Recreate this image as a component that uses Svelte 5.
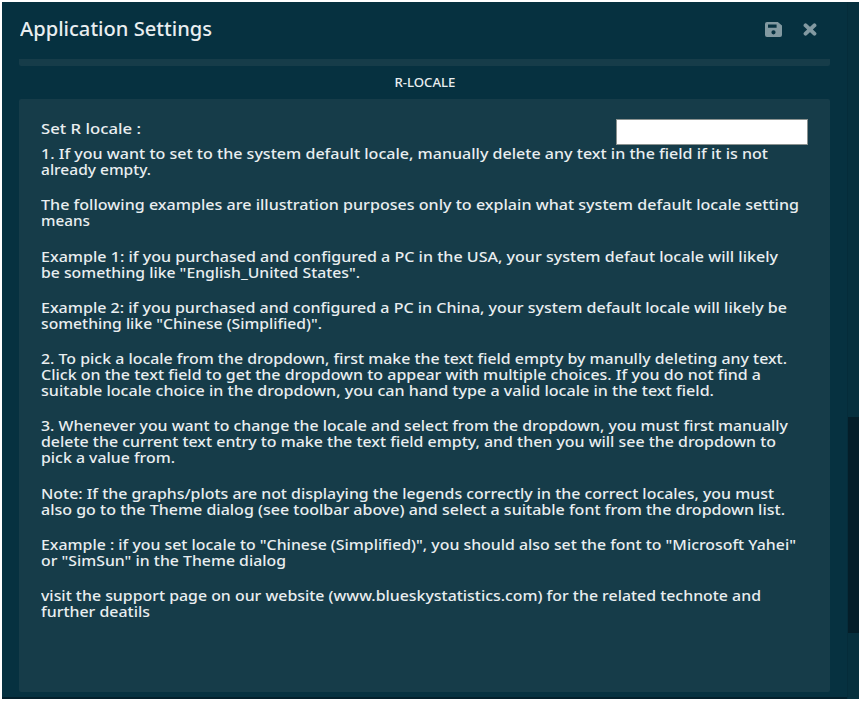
<script>
  // Each line carries its set width in pixels.
  const paragraphs = [
    [['1. If you want to set to the system default locale, manually delete any text in the field if it is not', 727], ['already empty.', 110]],
    [['The following examples are illustration purposes only to explain what system default locale setting', 758], ['means', 49]],
    [['Example 1: if you purchased and configured a PC in the USA, your system defaut locale will likely', 737], ['be something like "English_United States".', 319]],
    [['Example 2: if you purchased and configured a PC in China, your system default locale will likely be', 746], ['something like "Chinese (Simplified)".', 281]],
    [['2. To pick a locale from the dropdown, first make the text field empty by manully deleting any text.', 746], ['Click on the text field to get the dropdown to appear with multiple choices. If you do not find a', 720], ['suitable locale choice in the dropdown, you can hand type a valid locale in the text field.', 673]],
    [['3. Whenever you want to change the locale and select from the dropdown, you must first manually', 747], ['delete the current text entry to make the text field empty, and then you will see the dropdown to', 735], ['pick a value from.', 134]],
    [['Note: If the graphs/plots are not displaying the legends correctly in the correct locales, you must', 733], ['also go to the Theme dialog (see toolbar above) and select a suitable font from the dropdown list.', 744]],
    [['Example : if you set locale to "Chinese (Simplified)", you should also set the font to "Microsoft Yahei"', 755], ['or "SimSun" in the Theme dialog', 245]],
    [['visit the support page on our website (www.blueskystatistics.com) for the related technote and', 720], ['further deatils', 109]]
  ];

  function fit(node, width) {
    const natural = node.getBoundingClientRect().width;
    node.style.transform = `scaleX(${width / natural})`;
  }
</script>

<div class="window">
  <main class="dialog">
    <header>
      <h1><span class="fit" use:fit={192}>Application Settings</span></h1>
      <div class="actions">
        <button aria-label="Save">
          <svg width="17" height="15" viewBox="0 0 17 15"><path fill-rule="evenodd" d="M2 0H12.8L17 3.6V13Q17 15 15 15H2Q0 15 0 13V2Q0 0 2 0ZM3 2.4V5.8H11.6V2.4ZM8.5 8.2A2.1 2.1 0 1 0 8.5 12.4A2.1 2.1 0 1 0 8.5 8.2Z" /></svg>
        </button>
        <button aria-label="Close">
          <svg width="14" height="13" viewBox="0 0 14 13"><path d="M2.6 2.4L11.4 10.6M11.4 2.4L2.6 10.6" /></svg>
        </button>
      </div>
    </header>
    <div class="strip"></div>
    <h2><span class="fit center" use:fit={61}>R-LOCALE</span></h2>
    <section>
      <div class="field">
        <label for="locale"><span class="fit" use:fit={100}>Set R locale :</span></label>
        <input id="locale" type="text" />
      </div>
      {#each paragraphs as lines}
        <p>
          {#each lines as [text, width]}
            <span class="line"><span class="fit" use:fit={width}>{text}</span></span>
          {/each}
        </p>
      {/each}
    </section>
  </main>
  <aside><div class="thumb"></div></aside>
</div>

<style>
  :global(body) { background: #fff; }
  .window {
    box-sizing: border-box;
    width: 861px;
    height: 701px;
    border: 2px solid #fff;
    display: flex;
    background: #063140;
    color: #e9eef0;
    font-family: "Noto Sans", "Open Sans", sans-serif;
    box-shadow: inset 0 -2px #031f2b;
    overflow: hidden;
  }
  .dialog {
    flex: 1;
    display: flex;
    flex-direction: column;
    padding: 0 17px;
  }
  header {
    height: 57px;
    box-sizing: border-box;
    padding: 0 13px 3px 1px;
    display: flex;
    align-items: center;
    justify-content: space-between;
  }
  h1, h2, p { margin: 0; font-weight: 500; }
  .fit { display: inline-block; white-space: nowrap; transform-origin: 0 50%; }
  .center { transform-origin: 50% 50%; }
  h1 { font-size: 20px; line-height: 28px; }
  .actions { display: flex; gap: 21px; align-items: center; padding-top: 1px; }
  button { padding: 0; border: 0; background: none; display: flex; }
  svg { fill: #8299a1; }
  button:last-child path { stroke: #8299a1; stroke-width: 4; stroke-linecap: round; }
  .strip { height: 7px; background: #163c49; border-radius: 0 0 2px 2px; }
  h2 {
    height: 33px;
    line-height: 33px;
    font-size: 12.5px;
    text-align: center;
  }
  section {
    height: 593px;
    box-sizing: border-box;
    padding: 20px 22px 0;
    background: #163c49;
    border-radius: 2px;
    font-size: 15px;
    font-weight: 500;
    line-height: 16px;
  }
  .field { display: flex; justify-content: space-between; height: 26.2px; }
  label { line-height: 19px; }
  input {
    box-sizing: border-box;
    width: 192px;
    height: 26px;
    border: 1px solid #8b9290;
    background: #fff;
    border-radius: 0;
    padding: 0 4px;
  }
  p { margin-bottom: 19.25px; }
  .line { display: block; height: 16px; }
  aside { width: 12px; box-sizing: border-box; border-left: 1px solid #052c3a; background: #06303e; }
  .thumb { height: 216px; margin-top: 415px; background: #041e29; }
</style>
